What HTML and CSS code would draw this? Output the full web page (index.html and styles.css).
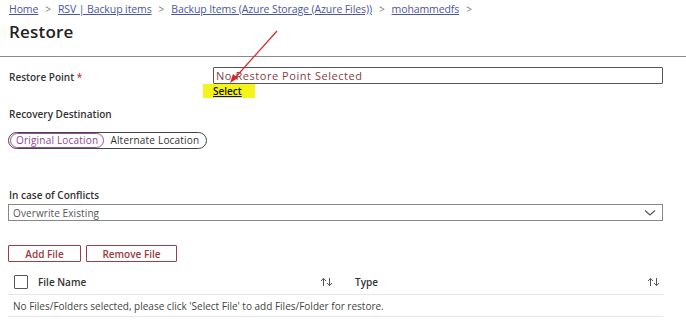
FILE: index.html
```html
<!DOCTYPE html>
<html>
<head>
<meta charset="utf-8">
<link rel="stylesheet" href="styles.css">
</head>
<body>
<div class="page">
  <nav class="crumbs">
    <a>Home</a><span class="sep">&gt;</span>
    <a>RSV | Backup items</a><span class="sep">&gt;</span>
    <a>Backup Items (Azure Storage (Azure Files))</a><span class="sep">&gt;</span>
    <a>mohammedfs</a><span class="sep">&gt;</span>
  </nav>
  <h1 class="title">Restore</h1>
  <div class="rule"></div>

  <div class="rp-row">
    <div class="label rp-label">Restore Point <span class="req">*</span></div>
    <div class="rp-field">
      <div class="input">No Restore Point Selected</div>
      <div class="select-wrap"><span class="select-link">Select</span></div>
    </div>
  </div>

  <div class="label sec">Recovery Destination</div>
  <div class="toggle">
    <span class="opt active">Original Location</span>
    <span class="opt">Alternate Location</span>
  </div>

  <div class="label conf">In case of Conflicts</div>
  <div class="dropdown">
    <span>Overwrite Existing</span>
    <svg class="chev" width="12" height="8" viewBox="0 0 12 8"><path d="M1 1.5 L6 6 L11 1.5" fill="none" stroke="#555" stroke-width="1.1"/></svg>
  </div>

  <div class="btns">
    <button class="btn">Add File</button>
    <button class="btn">Remove File</button>
  </div>

  <div class="table">
    <div class="thead">
      <div class="col c1"><span class="cb"></span><span class="th">File Name</span>
        <svg class="sort" width="13" height="10" viewBox="0 0 13 10"><path d="M3.5 9 V1.5 M1 4 L3.5 1.3 L6 4 M9.5 1 V8.5 M7 6 L9.5 8.7 L12 6" fill="none" stroke="#555" stroke-width="1"/></svg>
      </div>
      <div class="col c2"><span class="th">Type</span>
        <svg class="sort" width="13" height="10" viewBox="0 0 13 10"><path d="M3.5 9 V1.5 M1 4 L3.5 1.3 L6 4 M9.5 1 V8.5 M7 6 L9.5 8.7 L12 6" fill="none" stroke="#555" stroke-width="1"/></svg>
      </div>
    </div>
    <div class="trow">No Files/Folders selected, please click 'Select File' to add Files/Folder for restore.</div>
  </div>

  <svg class="arrow" width="60" height="60" viewBox="0 0 60 60">
    <line x1="57" y1="2" x2="14" y2="50" stroke="#d22" stroke-width="1.2"/>
    <path d="M10 54 L13 45 L18 49 Z" fill="#d22"/>
  </svg>
</div>
</body>
</html>
```
FILE: styles.css
```css
* { box-sizing: border-box; }
html, body { margin: 0; padding: 0; background: #fff; }
body {
  font-family: "Open Sans", "Noto Sans", sans-serif;
  font-size: 10px;
  color: #333;
  width: 686px;
  height: 326px;
  overflow: hidden;
}
.page { position: relative; padding: 0 0 0 8px; }
.crumbs {
  height: 18px;
  display: flex;
  align-items: center;
  padding-left: 1px;
  font-size: 10.5px;
  letter-spacing: -0.1px;
}
.crumbs a { color: #4b55a3; text-decoration: underline; }
.crumbs .sep { color: #777; margin: 0 7px; font-size: 10px; }
.title {
  margin: 4px 0 0 1px;
  font-size: 17px;
  font-weight: 600;
  color: #222;
  line-height: 20px;
  height: 20px;
  letter-spacing: 0.2px;
}
.rule {
  margin-top: 14px;
  margin-left: -8px;
  height: 1px;
  background: #8a8a8a;
  width: 686px;
}
.label { font-weight: 600; font-size: 10px; color: #333; padding-left: 1px; }
.rp-row { display: flex; margin-top: 10px; }
.rp-label { width: 205px; padding-top: 3px; }
.req { color: #c33; }
.rp-field { display: flex; flex-direction: column; }
.input {
  width: 450px;
  height: 17px;
  border: 1px solid #555;
  border-radius: 1px;
  color: #8b3b3f;
  padding-left: 2px;
  line-height: 15px;
  font-size: 11px;
  letter-spacing: 0.55px;
}
.select-wrap {
  margin-left: -10px;
  width: 52px;
  height: 14px;
  background: #f4f41a;
  padding-left: 10px;
  line-height: 14px;
}
.select-link { color: #111; text-decoration: underline; font-weight: 600; }
.sec { margin-top: 9px; line-height: 14px; }
.toggle {
  margin-top: 11px;
  width: 199px;
  height: 17px;
  border: 1px solid #444;
  border-radius: 9px;
  display: flex;
  align-items: center;
  padding-left: 1px;
  letter-spacing: 0.2px;
}
.opt { padding: 0 5px; line-height: 13px; color: #333; }
.opt.active {
  border: 1.3px solid #9b4f9f;
  border-radius: 8px;
  color: #8e3f96;
  padding: 0 5px;
  margin-right: 1px;
}
.conf { margin-top: 39px; line-height: 14px; }
.dropdown {
  margin-top: 2px;
  width: 655px;
  height: 17px;
  border: 1px solid #888;
  display: flex;
  align-items: center;
  justify-content: space-between;
  padding: 0 6px 0 4px;
  color: #555;
  letter-spacing: 0.1px;
}
.btns { display: flex; gap: 5px; margin-top: 24px; }
.btn {
  height: 17px;
  border: 1px solid #9f3e45;
  background: #fff;
  color: #9a3b41;
  font-family: inherit;
  font-size: 10px;
  font-weight: 600;
  padding: 0;
  border-radius: 1px;
}
.btn:nth-child(1) { width: 73px; }
.btn:nth-child(2) { width: 91px; }
.table { width: 655px; margin-top: 8px; }
.thead {
  display: flex;
  height: 25px;
  align-items: center;
  border-bottom: 1px solid #e6e6e6;
}
.col { display: flex; align-items: center; }
.c1 { width: 333px; padding-left: 6px; }
.c2 { flex: 1; padding-left: 14px; }
.cb {
  width: 14px; height: 14px;
  border: 1px solid #555;
  border-radius: 1px;
  margin-right: 10px;
}
.th { font-weight: 600; color: #333; flex: 1; }
.sort { margin-right: 8px; }
.c2 .sort { margin-right: 3px; }
.trow {
  height: 22px;
  line-height: 22px;
  border-bottom: 1px solid #e6e6e6;
  padding-left: 5px;
  color: #444;
}
.arrow { position: absolute; left: 220px; top: 29px; }
```
